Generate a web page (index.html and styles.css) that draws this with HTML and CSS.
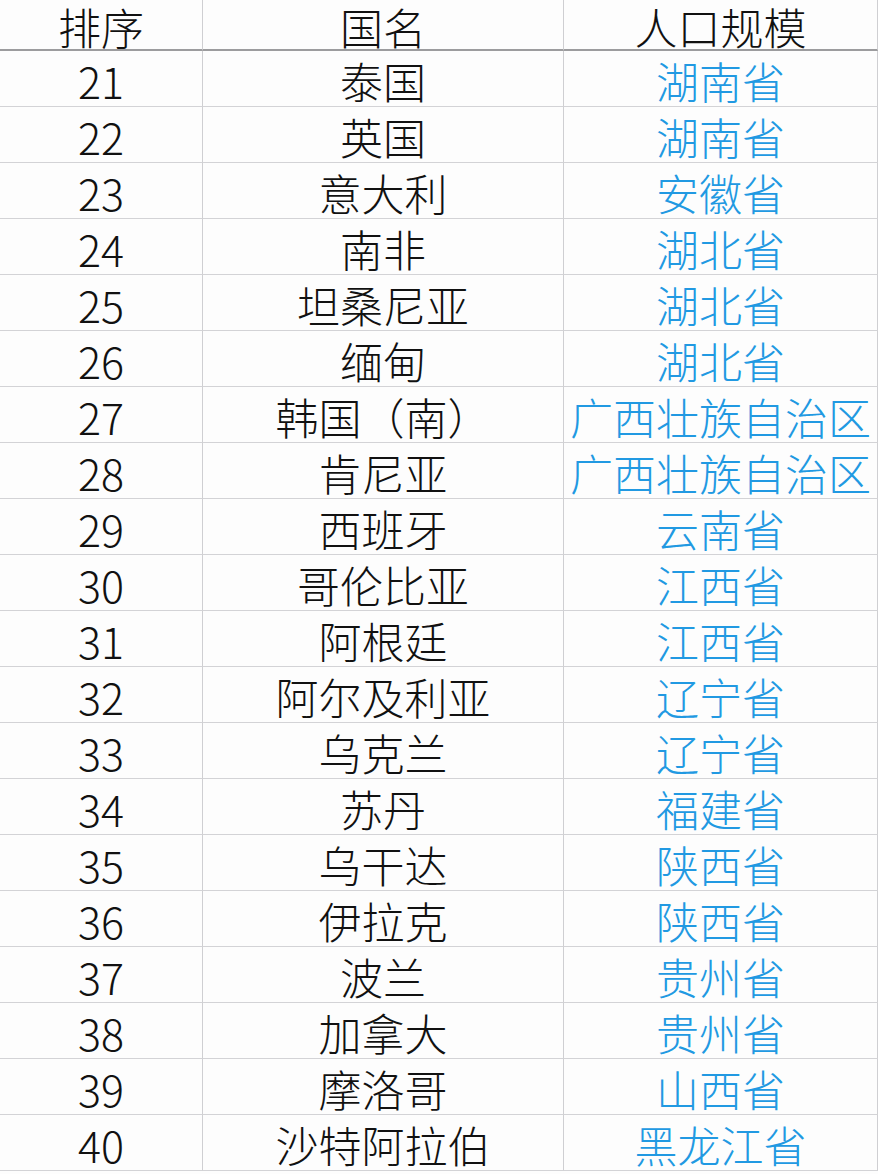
FILE: index.html
```html
<!DOCTYPE html>
<html lang="zh-CN">
<head>
<meta charset="utf-8">
<title>人口规模</title>
<link rel="stylesheet" href="styles.css">
</head>
<body>
<div class="sheet">
  <div class="cell head">排序</div><div class="cell head">国名</div><div class="cell head">人口规模</div>
  <div class="cell">21</div><div class="cell">泰国</div><div class="cell prov">湖南省</div>
  <div class="cell">22</div><div class="cell">英国</div><div class="cell prov">湖南省</div>
  <div class="cell">23</div><div class="cell">意大利</div><div class="cell prov">安徽省</div>
  <div class="cell">24</div><div class="cell">南非</div><div class="cell prov">湖北省</div>
  <div class="cell">25</div><div class="cell">坦桑尼亚</div><div class="cell prov">湖北省</div>
  <div class="cell">26</div><div class="cell">缅甸</div><div class="cell prov">湖北省</div>
  <div class="cell">27</div><div class="cell">韩国（南）</div><div class="cell prov">广西壮族自治区</div>
  <div class="cell">28</div><div class="cell">肯尼亚</div><div class="cell prov">广西壮族自治区</div>
  <div class="cell">29</div><div class="cell">西班牙</div><div class="cell prov">云南省</div>
  <div class="cell">30</div><div class="cell">哥伦比亚</div><div class="cell prov">江西省</div>
  <div class="cell">31</div><div class="cell">阿根廷</div><div class="cell prov">江西省</div>
  <div class="cell">32</div><div class="cell">阿尔及利亚</div><div class="cell prov">辽宁省</div>
  <div class="cell">33</div><div class="cell">乌克兰</div><div class="cell prov">辽宁省</div>
  <div class="cell">34</div><div class="cell">苏丹</div><div class="cell prov">福建省</div>
  <div class="cell">35</div><div class="cell">乌干达</div><div class="cell prov">陕西省</div>
  <div class="cell">36</div><div class="cell">伊拉克</div><div class="cell prov">陕西省</div>
  <div class="cell">37</div><div class="cell">波兰</div><div class="cell prov">贵州省</div>
  <div class="cell">38</div><div class="cell">加拿大</div><div class="cell prov">贵州省</div>
  <div class="cell">39</div><div class="cell">摩洛哥</div><div class="cell prov">山西省</div>
  <div class="cell">40</div><div class="cell">沙特阿拉伯</div><div class="cell prov">黑龙江省</div>
</div>
</body>
</html>
```

FILE: styles.css
```css
html, body {
  margin: 0;
  padding: 0;
  background: #fdfdfd;
}
.sheet {
  display: grid;
  grid-template-columns: 203px 361px 1fr;
  grid-template-rows: 51px;
  grid-auto-rows: 56px;
  width: 878px;
  font-family: "Noto Sans CJK SC", "Noto Sans", sans-serif;
  font-size: 43px;
  font-weight: 300;
  color: #111111;
}
.cell {
  box-sizing: border-box;
  display: flex;
  align-items: center;
  justify-content: center;
  padding-top: 3px;
  line-height: 1;
  white-space: nowrap;
  border-right: 1px solid #cfcfd2;
  border-bottom: 1px solid #d3d3d6;
}
.head {
  padding-top: 3px;
  border-bottom: 2px solid #9c9c9e;
}
.prov {
  color: #2199e2;
}
```
